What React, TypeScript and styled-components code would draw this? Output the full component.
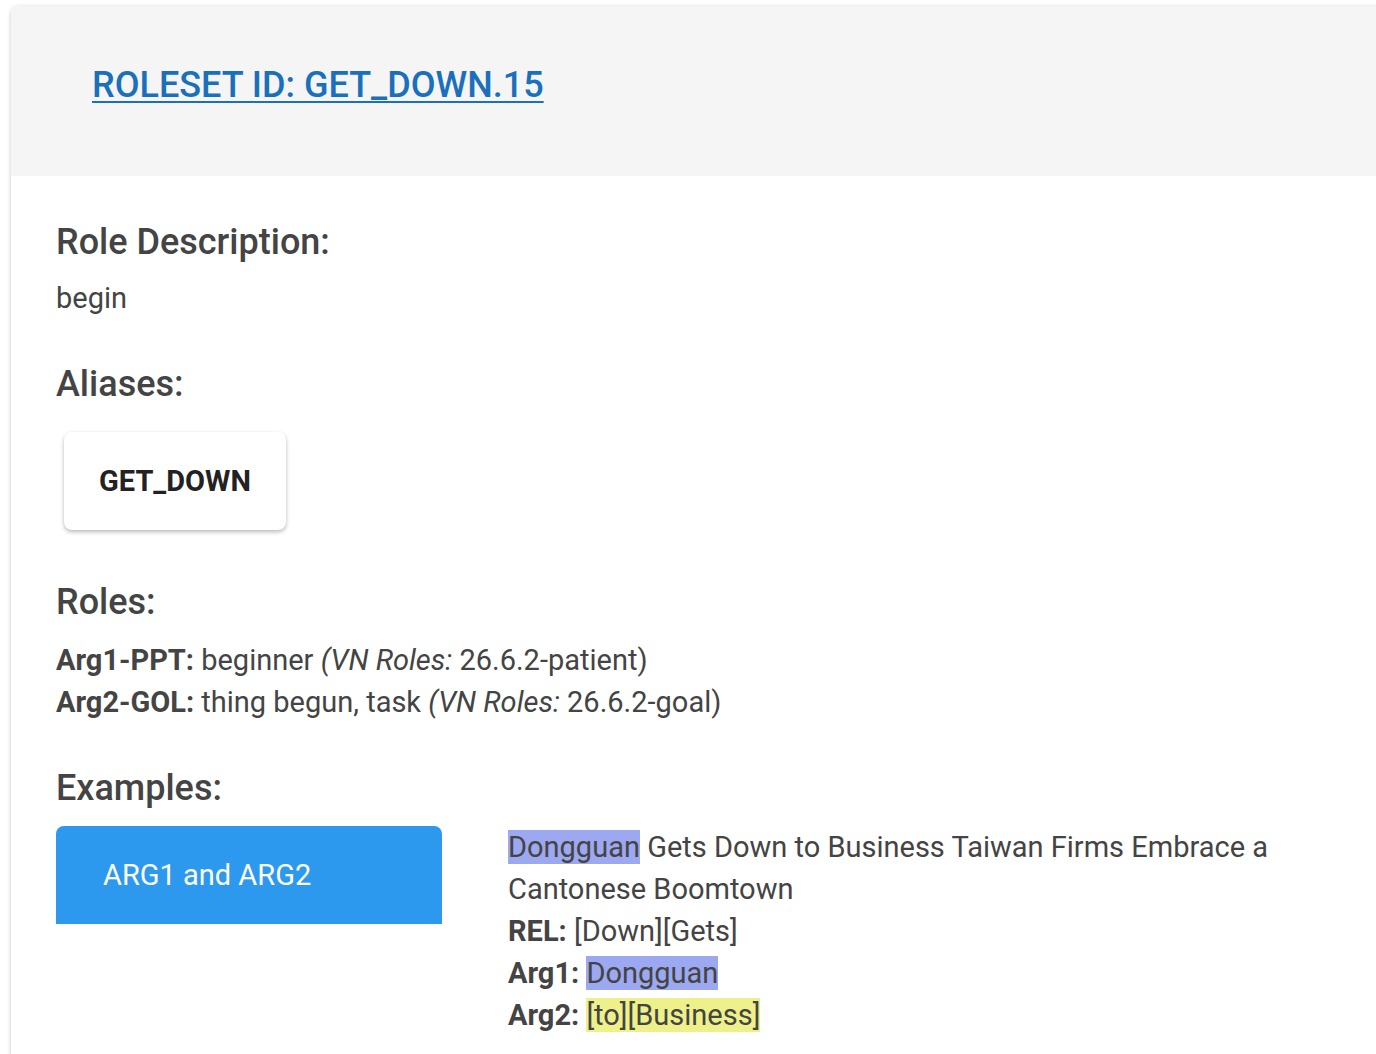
import React from "react";
import styled, { createGlobalStyle } from "styled-components";

const Global = createGlobalStyle`
  html, body { margin: 0; padding: 0; background: #ffffff; }
  body { font-family: Roboto, "Noto Sans", "Liberation Sans", sans-serif; color: #444444; }
`;

const Page = styled.div`
  padding: 6px 0 0 11px;
  width: 1376px;
  box-sizing: border-box;
  overflow: hidden;
`;

const Card = styled.div`
  width: 1400px;
  min-height: 1100px;
  background: #fff;
  border-radius: 8px 0 0 0;
  box-shadow: 0 1px 4px rgba(0, 0, 0, 0.22);
  overflow: hidden;
`;

const Header = styled.div`
  height: 170px;
  background: #f5f5f5;
  padding: 0 0 0 81px;
  display: flex;
  align-items: center;
  box-sizing: border-box;
`;

const TitleLink = styled.a`
  font-size: 36px;
  font-weight: 500;
  color: #1a70ba;
  text-decoration: underline;
  text-decoration-thickness: 2px;
  text-underline-offset: 4px;
  margin-top: -12px;
`;

const Body = styled.div`
  padding: 44px 0 0 45px;
`;

const Section = styled.section`
  margin-bottom: 43px;
`;

const Heading = styled.h2`
  font-size: 36px;
  font-weight: 500;
  color: #444;
  margin: 0 0 13px;
  line-height: 44px;
`;

const Text = styled.p`
  font-size: 29px;
  line-height: 42px;
  margin: 0;
  color: #444;
`;

const RoleList = styled.div`
  padding-top: 2px;
`;

const Chip = styled.div`
  display: inline-flex;
  align-items: center;
  justify-content: center;
  width: 222px;
  height: 98px;
  margin: 13px 0 7px 8px;
  border-radius: 8px;
  background: #fff;
  box-shadow: 0 2px 4px rgba(0, 0, 0, 0.28);
  font-size: 29px;
  font-weight: 700;
  color: #222;
`;

const Strong = styled.b`
  font-weight: 700;
`;

const Em = styled.i`
  font-style: italic;
`;

const Examples = styled.div`
  display: flex;
  align-items: flex-start;
  gap: 66px;
  padding-top: 3px;
`;

const Tab = styled.div`
  flex: none;
  width: 386px;
  height: 98px;
  background: #2c99ee;
  border-radius: 8px 8px 0 0;
  color: #fff;
  font-size: 29px;
  display: flex;
  align-items: center;
  padding-left: 47px;
  box-sizing: border-box;
`;

const ExampleText = styled.div`
  font-size: 29px;
  line-height: 42px;
  color: #444;
  width: 790px;
`;

const Mark = styled.span<{ $tone: "blue" | "yellow" }>`
  background: ${(p) => (p.$tone === "blue" ? "#9ca8ef" : "#eef08a")};
`;

export default function App() {
  return (
    <>
      <Global />
      <Page>
        <Card>
          <Header>
            <TitleLink href="#">ROLESET ID: GET_DOWN.15</TitleLink>
          </Header>
          <Body>
            <Section>
              <Heading>Role Description:</Heading>
              <Text>begin</Text>
            </Section>
            <Section>
              <Heading>Aliases:</Heading>
              <Chip>GET_DOWN</Chip>
            </Section>
            <Section>
              <Heading>Roles:</Heading>
              <RoleList>
                <Text>
                  <Strong>Arg1-PPT:</Strong> beginner <Em>(VN Roles:</Em> 26.6.2-patient)
                </Text>
                <Text>
                  <Strong>Arg2-GOL:</Strong> thing begun, task <Em>(VN Roles:</Em> 26.6.2-goal)
                </Text>
              </RoleList>
            </Section>
            <Section>
              <Heading>Examples:</Heading>
              <Examples>
                <Tab>ARG1 and ARG2</Tab>
                <ExampleText>
                  <div>
                    <Mark $tone="blue">Dongguan</Mark> Gets Down to Business Taiwan Firms Embrace a Cantonese Boomtown
                  </div>
                  <div>
                    <Strong>REL:</Strong> [Down][Gets]
                  </div>
                  <div>
                    <Strong>Arg1:</Strong> <Mark $tone="blue">Dongguan</Mark>
                  </div>
                  <div>
                    <Strong>Arg2:</Strong> <Mark $tone="yellow">[to][Business]</Mark>
                  </div>
                </ExampleText>
              </Examples>
            </Section>
          </Body>
        </Card>
      </Page>
    </>
  );
}
